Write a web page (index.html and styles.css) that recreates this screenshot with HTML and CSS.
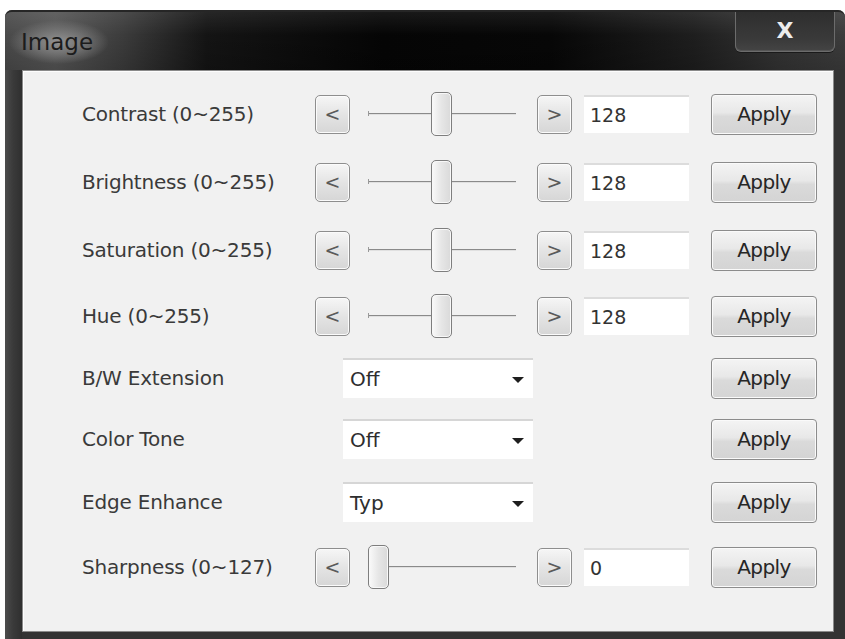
FILE: index.html
```html
<!DOCTYPE html>
<html>
<head>
<meta charset="utf-8">
<link rel="stylesheet" href="styles.css">
</head>
<body>
<div class="window">
  <div class="titlebar">
    <span class="title">Image</span>
    <div class="close">X</div>
  </div>
  <div class="panel">
    <div class="row">
      <span class="label">Contrast (0~255)</span>
      <span class="arrow-btn">&lt;</span>
      <span class="slider"><span class="thumb" style="left:63px"></span></span>
      <span class="arrow-btn next">&gt;</span>
      <span class="textbox">128</span>
      <span class="apply">Apply</span>
    </div>
    <div class="row">
      <span class="label">Brightness (0~255)</span>
      <span class="arrow-btn">&lt;</span>
      <span class="slider"><span class="thumb" style="left:63px"></span></span>
      <span class="arrow-btn next">&gt;</span>
      <span class="textbox">128</span>
      <span class="apply">Apply</span>
    </div>
    <div class="row">
      <span class="label">Saturation (0~255)</span>
      <span class="arrow-btn">&lt;</span>
      <span class="slider"><span class="thumb" style="left:63px"></span></span>
      <span class="arrow-btn next">&gt;</span>
      <span class="textbox">128</span>
      <span class="apply">Apply</span>
    </div>
    <div class="row">
      <span class="label">Hue (0~255)</span>
      <span class="arrow-btn">&lt;</span>
      <span class="slider"><span class="thumb" style="left:63px"></span></span>
      <span class="arrow-btn next">&gt;</span>
      <span class="textbox">128</span>
      <span class="apply">Apply</span>
    </div>
    <div class="row">
      <span class="label wide">B/W Extension</span>
      <span class="dropdown">Off<span class="caret"></span></span>
      <span class="apply">Apply</span>
    </div>
    <div class="row">
      <span class="label wide">Color Tone</span>
      <span class="dropdown">Off<span class="caret"></span></span>
      <span class="apply">Apply</span>
    </div>
    <div class="row">
      <span class="label wide">Edge Enhance</span>
      <span class="dropdown">Typ<span class="caret"></span></span>
      <span class="apply">Apply</span>
    </div>
    <div class="row">
      <span class="label">Sharpness (0~127)</span>
      <span class="arrow-btn">&lt;</span>
      <span class="slider"><span class="thumb" style="left:0px"></span></span>
      <span class="arrow-btn next">&gt;</span>
      <span class="textbox">0</span>
      <span class="apply">Apply</span>
    </div>
  </div>
</div>
</body>
</html>
```
FILE: styles.css
```css
html, body {
  margin: 0;
  padding: 0;
  background: #ffffff;
  overflow: hidden;
  width: 845px;
  height: 639px;
}

.window {
  margin: 10px 0 0 5px;
  width: 840px;
  height: 640px;
  box-sizing: border-box;
  padding: 0 11px 0 17px;
  border-radius: 7px 7px 0 0;
  background:
    linear-gradient(to right, #4c4c4c 0px, #3a3a3a 8px, #2f2f2f 17px, rgba(0,0,0,0) 17px),
    linear-gradient(to right, #333 0, #333 100%);
  box-shadow: inset 0 1px 0 #6a6a6a;
  font-family: "DejaVu Sans", "Liberation Sans", sans-serif;
}

.titlebar {
  height: 60px;
  margin: 0 -11px 0 -17px;
  padding: 0 10px 0 4px;
  display: flex;
  justify-content: space-between;
  align-items: flex-start;
  border-radius: 7px 7px 0 0;
  background:
    linear-gradient(to bottom, rgba(255,255,255,0.08), rgba(0,0,0,0) 40%, rgba(0,0,0,0.15) 100%),
    linear-gradient(to right, #4a4a4a 0%, #555 6%, #3c3c3c 14%, #141414 24%, #050505 45%, #070707 65%, #1e1e1e 82%, #333 92%, #3c3c3c 100%);
  border-top: 2px solid #262626;
  box-sizing: border-box;
}

.title {
  align-self: center;
  margin-top: 2px;
  padding: 8px 16px 8px 12px;
  font-size: 23px;
  line-height: 28px;
  color: #1c1c1c;
  background: radial-gradient(closest-side, rgba(150,150,150,0.95), rgba(125,125,125,0.7) 55%, rgba(90,90,90,0) 100%);
}

.close {
  width: 100px;
  height: 40px;
  box-sizing: border-box;
  border: 1px solid #6c6c6c;
  border-top: none;
  border-radius: 0 0 6px 6px;
  background: linear-gradient(to bottom, #2e2e2e, #3a3a3a 70%, #444);
  box-shadow: inset 0 -1px 0 #555, 0 1px 0 #1a1a1a;
  color: #ececec;
  font-weight: bold;
  font-size: 22px;
  line-height: 38px;
  text-align: center;
  font-family: "DejaVu Sans", sans-serif;
}

.panel {
  height: 562px;
  box-sizing: border-box;
  background: #f1f1f1;
  border: 1px solid #8a8a8a;
  box-shadow: inset 1px 1px 0 #fdfdfd;
  padding: 9px 0 0 59px;
  display: grid;
  grid-template-rows: 68px 68px 68px 64px 60px 62px 64px 66px;
  align-content: start;
}

.row {
  display: flex;
  align-items: center;
}

.label {
  width: 233px;
  flex: none;
  font-size: 20px;
  color: #3a3a3a;
  letter-spacing: -0.2px;
}

.label.wide {
  width: 261px;
}

.arrow-btn {
  flex: none;
  width: 35px;
  height: 39px;
  box-sizing: border-box;
  border: 1px solid #8e8e8e;
  border-radius: 5px;
  background: linear-gradient(to bottom, #f6f6f6, #e4e4e4 50%, #d6d6d6);
  box-shadow: inset 0 0 0 1px #fbfbfb;
  color: #5a5a5a;
  font-size: 19px;
  display: flex;
  align-items: center;
  justify-content: center;
}

.arrow-btn.next {
  margin-left: 21px;
}

.slider {
  position: relative;
  flex: none;
  width: 148px;
  height: 44px;
  margin-left: 18px;
  background: linear-gradient(to bottom, rgba(0,0,0,0) 21px, #8a8a8a 21px, #8a8a8a 22px, #e0e0e0 22px, #e0e0e0 23px, rgba(0,0,0,0) 23px);
}

.slider::before {
  content: "";
  position: absolute;
  left: 0;
  top: 19px;
  width: 1px;
  height: 5px;
  background: #9a9a9a;
}

.thumb {
  position: absolute;
  top: 0;
  width: 21px;
  height: 44px;
  box-sizing: border-box;
  border: 1px solid #7e7e7e;
  border-radius: 5px;
  background: linear-gradient(to right, #fafafa, #e6e6e6 50%, #d9d9d9);
  box-shadow: inset 0 0 0 1px #f8f8f8;
}

.textbox {
  flex: none;
  width: 105px;
  height: 38px;
  margin-left: 12px;
  box-sizing: border-box;
  background: #ffffff;
  border-top: 2px solid #dcdcdc;
  padding-left: 6px;
  font-size: 19px;
  color: #333;
  display: flex;
  align-items: center;
}

.apply {
  flex: none;
  width: 106px;
  height: 41px;
  margin-left: 22px;
  box-sizing: border-box;
  border: 1px solid #8c8c8c;
  border-radius: 4px;
  background: linear-gradient(to bottom, #f4f4f4, #e8e8e8 45%, #dadada 55%, #d4d4d4);
  box-shadow: inset 0 0 0 1px #fafafa;
  font-size: 20px;
  color: #262626;
  display: flex;
  align-items: center;
  justify-content: center;
  letter-spacing: -0.6px;
}

.dropdown {
  position: relative;
  flex: none;
  width: 190px;
  height: 40px;
  box-sizing: border-box;
  background: #ffffff;
  border-top: 2px solid #d6d6d6;
  padding-left: 7px;
  font-size: 20px;
  color: #2e2e2e;
  display: flex;
  align-items: center;
}

.dropdown + .apply {
  margin-left: 178px;
}

.caret {
  position: absolute;
  right: 9px;
  top: 17px;
  width: 0;
  height: 0;
  border-left: 6px solid transparent;
  border-right: 6px solid transparent;
  border-top: 6px solid #1e1e1e;
}
```
